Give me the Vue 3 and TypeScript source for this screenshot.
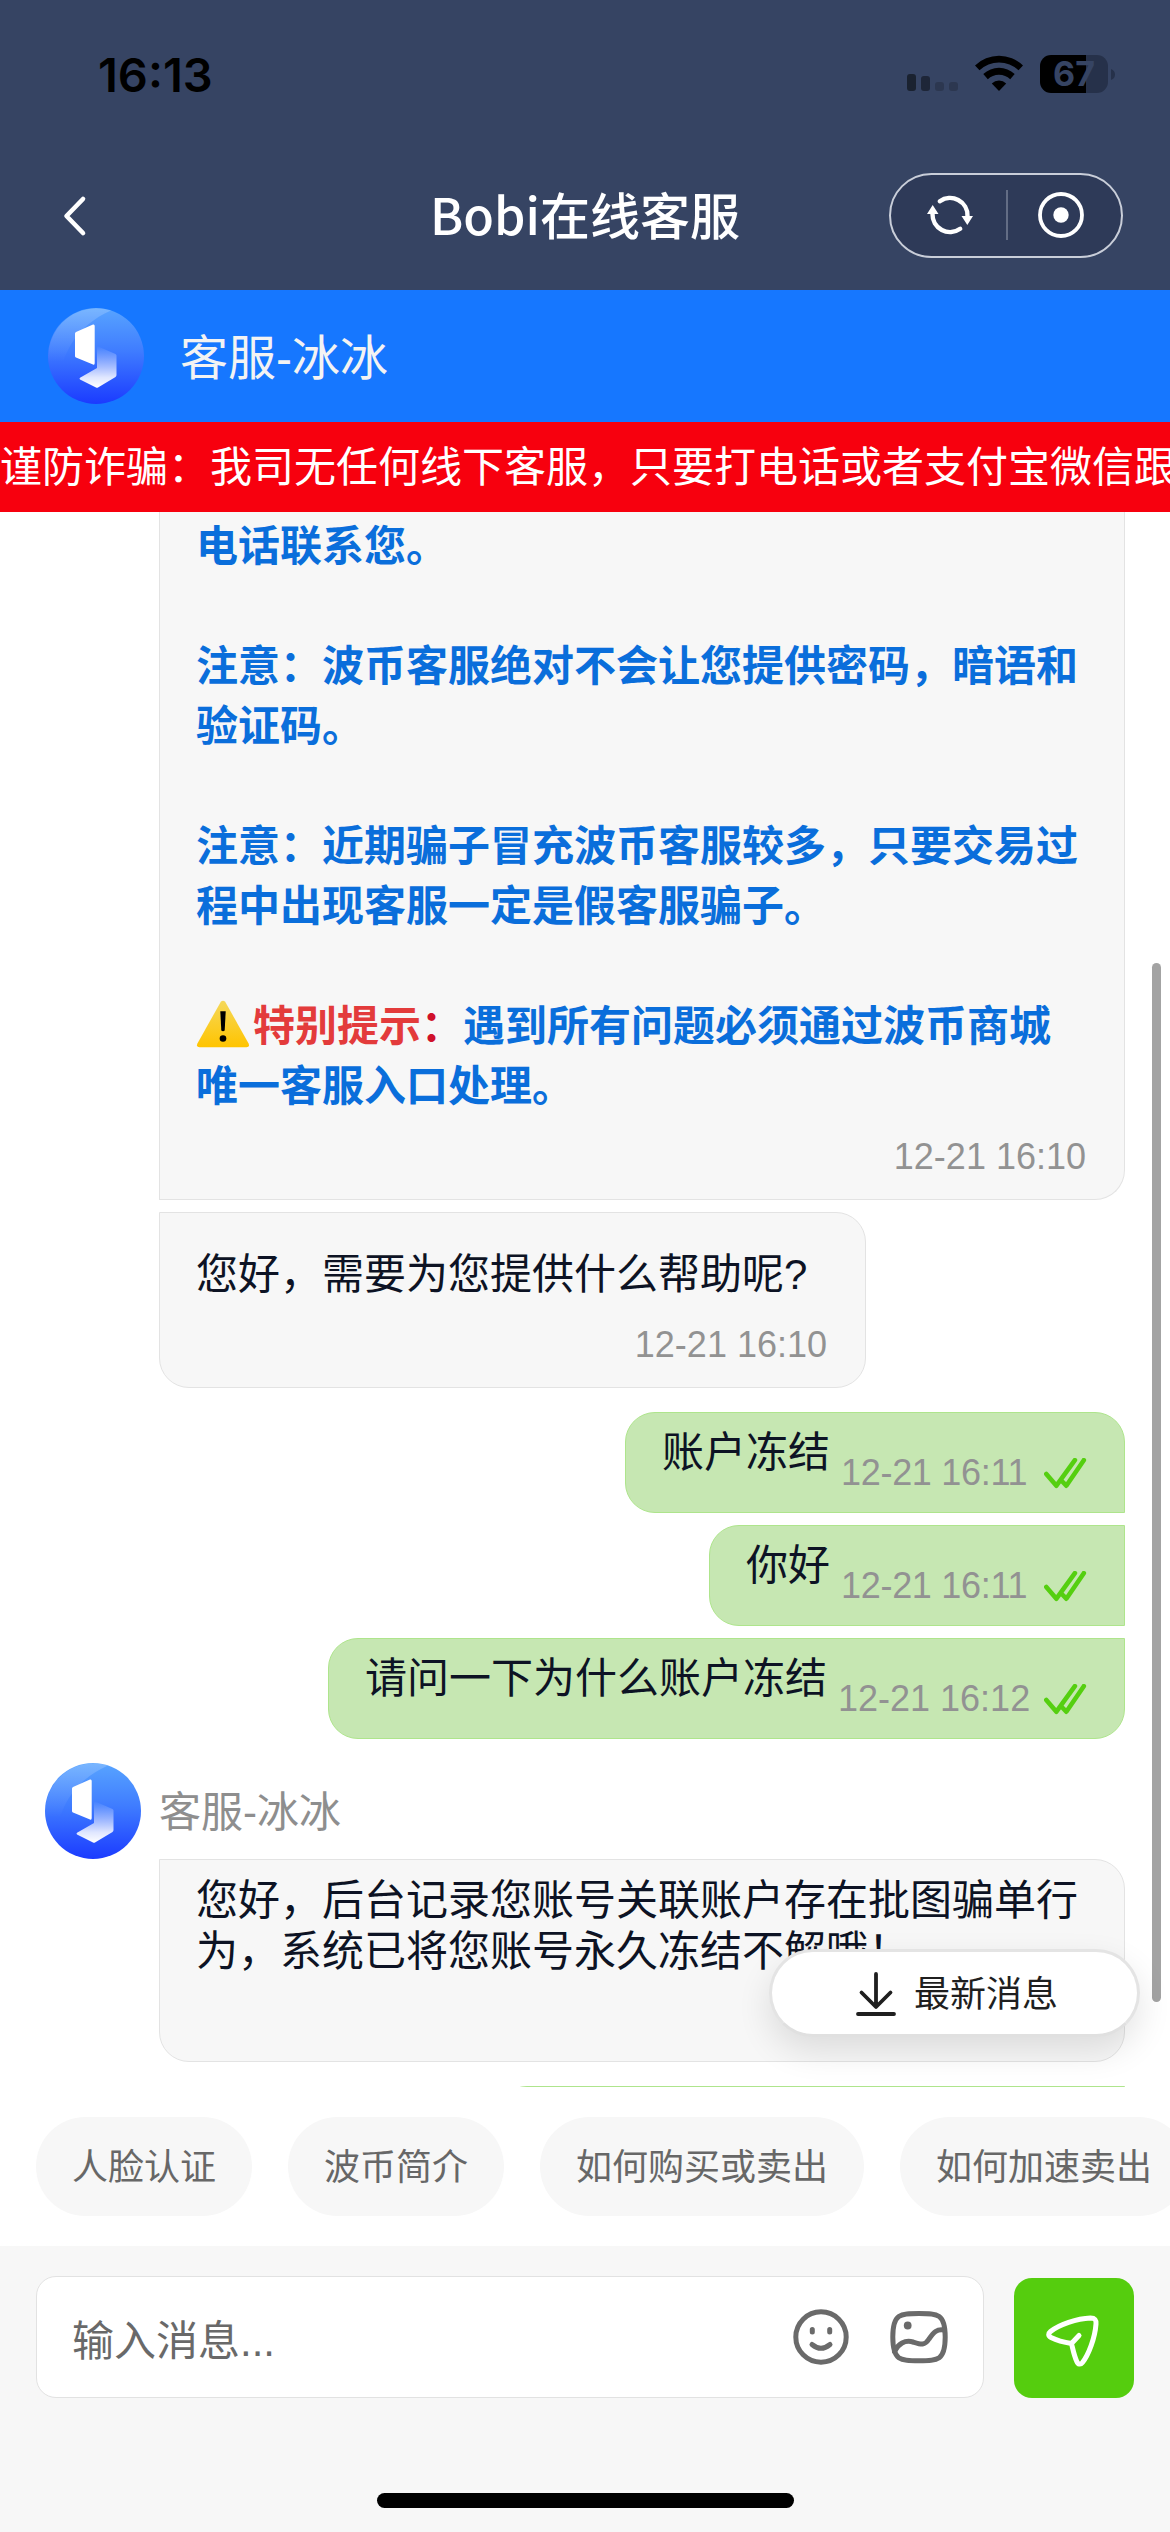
<script setup lang="ts">
interface Reply {
  id: number
  text: string
  time: string
  shape: 'first' | 'middle' | 'last'
}

const replies: Reply[] = [
  { id: 1, text: '账户冻结', time: '12-21 16:11', shape: 'first' },
  { id: 2, text: '你好', time: '12-21 16:11', shape: 'middle' },
  { id: 3, text: '请问一下为什么账户冻结', time: '12-21 16:12', shape: 'last' },
]

const quickReplies: string[] = ['人脸认证', '波币简介', '如何购买或卖出', '如何加速卖出']
</script>

<template>
  <div class="screen">
    <svg class="defs" width="0" height="0" aria-hidden="true">
      <defs>
        <linearGradient id="disc" x1="0" y1="0" x2="0" y2="1">
          <stop offset="0" stop-color="#58a4ff" />
          <stop offset="0.45" stop-color="#3f7cff" />
          <stop offset="1" stop-color="#1b3bff" />
        </linearGradient>
        <linearGradient id="sheen" x1="0" y1="0" x2="0" y2="1">
          <stop offset="0" stop-color="#fff" stop-opacity="0.2" />
          <stop offset="0.7" stop-color="#fff" stop-opacity="0" />
        </linearGradient>
        <linearGradient id="fold" x1="0" y1="0" x2="0" y2="1">
          <stop offset="0" stop-color="#fff" stop-opacity="0" />
          <stop offset="0.75" stop-color="#fff" stop-opacity="0.85" />
          <stop offset="1" stop-color="#fff" />
        </linearGradient>
        <symbol id="avatar" viewBox="0 0 96 96">
          <circle cx="48" cy="48" r="48" fill="url(#disc)" />
          <path d="M63 2.5A48 48 0 0 0 10 77C14 45 28 18 63 2.5Z" fill="url(#sheen)" />
          <path d="M28 24 45 16.5Q46.700 16 46.700 18V55Q46.700 57.500 45 56.500L28 49.500Q27 49 27 48V25.500Q27 24.500 28 24Z" fill="#fff" />
          <path d="M49 38 67.500 46Q68.500 46.500 68.500 47.500V67Q68.500 68 67.500 69L50 79.500Q49 80 48 79.500L32 71.500Q31 70.500 32 69.800L49 60Z" fill="url(#fold)" />
        </symbol>
        <symbol id="ticks" viewBox="0 0 44 32">
          <path d="M2.300 15.900 12.400 27.700 30.900 2.200M18.300 23.500 22.300 27.700 39.800 2.200" fill="none" stroke="#55cf10" stroke-width="4.600" stroke-linecap="round" stroke-linejoin="round" />
        </symbol>
      </defs>
    </svg>

    <header class="top">
      <div class="status">
        <span class="clock">16:13</span>
        <div class="status-icons">
          <svg class="signal" width="51" height="17" viewBox="0 0 51 17">
            <rect x="0" y="0" width="9" height="17" rx="3" fill="#1a2230" />
            <rect x="14" y="2" width="9" height="15" rx="3" fill="#1e2638" />
            <rect x="28" y="8" width="9" height="9" rx="3" fill="#2c3750" />
            <rect x="42" y="8" width="9" height="9" rx="3" fill="#2c3750" />
          </svg>
          <svg class="wifi" width="48" height="36" viewBox="0 0 48 36">
            <path d="M0 10.500A34.500 34.500 0 0 1 48 10.500L43.500 15.300A28 28 0 0 0 4.500 15.300Z" />
            <path d="M8.300 19A23 23 0 0 1 39.700 19L35.200 24.200A16 16 0 0 0 12.800 24.200Z" />
            <path d="M16.800 28.400A10.500 10.500 0 0 1 31.200 28.400L24 36Z" />
          </svg>
          <div class="battery">
            <span class="level">67</span>
          </div>
          <svg class="nub" width="4" height="11" viewBox="0 0 4 11"><path d="M0 0Q4 1.500 4 5.500T0 11Z" fill="#26314a" /></svg>
        </div>
      </div>
      <div class="nav">
        <svg class="back" width="28" height="44" viewBox="0 0 28 44">
          <path d="M22 5 5.500 22 22 39" fill="none" stroke="#fff" stroke-width="4.600" stroke-linecap="round" stroke-linejoin="round" />
        </svg>
        <h1>Bobi在线客服</h1>
        <div class="capsule">
          <svg width="50" height="50" viewBox="0 0 50 50">
            <g fill="none" stroke="#fff" stroke-width="4.400" stroke-linecap="round">
              <path d="M14.800 11.300A17.500 17.500 0 0 1 42.500 26" />
              <path d="M35.200 38.700A17.500 17.500 0 0 1 7.500 24" />
            </g>
            <path d="M36.500 26H48L42.300 35Z M2 24H13.500L7.700 15Z" fill="#fff" />
          </svg>
          <i class="split"></i>
          <svg width="50" height="50" viewBox="0 0 50 50">
            <circle cx="25" cy="25" r="21" fill="none" stroke="#fff" stroke-width="3.800" />
            <circle cx="25" cy="25" r="7.700" fill="#fff" />
          </svg>
        </div>
      </div>
    </header>

    <div class="agent-bar">
      <svg class="avatar"><use href="#avatar" /></svg>
      <span>客服-冰冰</span>
    </div>
    <div class="notice">谨防诈骗：我司无任何线下客服，只要打电话或者支付宝微信跟</div>

    <main class="chat">
      <article class="bubble in warning">
        <div class="body">
          电话联系您。<br /><br />注意：波币客服绝对不会让您提供密码，暗语和验证码。<br /><br />注意：近期骗子冒充波币客服较多，只要交易过程中出现客服一定是假客服骗子。<br /><br /><svg class="alert" width="54" height="48" viewBox="0 0 54 48">
            <defs>
              <linearGradient id="amber" x1="0" y1="0" x2="0" y2="1">
                <stop offset="0" stop-color="#f5d85a" />
                <stop offset="1" stop-color="#ffc400" />
              </linearGradient>
            </defs>
            <path d="M24.800 1.800Q27 -0.500 29.200 1.800L52.600 43.500Q54 47 50.500 47.200H3.500Q0 47 1.400 43.500Z" fill="url(#amber)" />
            <path d="M24.300 11.300H29.700L28.700 30.600Q27 32 25.300 30.600Z" />
            <circle cx="27" cy="38.500" r="3.300" />
          </svg><em>特别提示</em><b>：</b>遇到所有问题必须通过波币商城唯一客服入口处理。
        </div>
        <time>12-21 16:10</time>
      </article>

      <article class="bubble in greeting">
        <div class="body">您好，需要为您提供什么帮助呢?</div>
        <time>12-21 16:10</time>
      </article>

      <section class="mine">
        <article v-for="r in replies" :key="r.id" class="bubble out" :class="r.shape">
          <span class="body">{{ r.text }}</span>
          <time>{{ r.time }}</time>
          <svg class="ticks"><use href="#ticks" /></svg>
        </article>
      </section>

      <div class="sender">
        <svg class="avatar"><use href="#avatar" /></svg>
        <span>客服-冰冰</span>
      </div>
      <article class="bubble in verdict">
        <div class="body">您好，后台记录您账号关联账户存在批图骗单行为，系统已将您账号永久冻结不解哦！</div>
      </article>
      <article class="bubble out next"></article>

      <i class="scrollbar"></i>
      <button class="latest" type="button">
        <svg width="42" height="46" viewBox="0 0 42 46" fill="none" stroke="#1f1f1f" stroke-width="3.800" stroke-linecap="round" stroke-linejoin="round">
          <path d="M21 4V36M6.500 22.500 21 37 35.500 22.500M3 44H39" />
        </svg>
        <span>最新消息</span>
      </button>
    </main>

    <nav class="chips">
      <span v-for="q in quickReplies" :key="q" class="chip">{{ q }}</span>
    </nav>

    <footer>
      <div class="field">
        <span class="placeholder">输入消息...</span>
        <svg width="58" height="58" viewBox="0 0 58 58" fill="none" stroke="#6a6a6a" stroke-width="5" stroke-linecap="round">
          <circle cx="29" cy="29" r="25.200" />
          <path d="M20.300 21.500V24M37.700 21.500V24" />
          <path d="M20 36.500Q29 44 38 36.500" />
        </svg>
        <svg class="photo" width="58" height="58" viewBox="0 0 58 58" fill="none" stroke="#6a6a6a" stroke-width="5" stroke-linecap="round">
          <path d="M29 5.500C48 5.500 55.200 5.500 55.200 29S48 52.700 29 52.700 2.800 52.500 2.800 29 10 5.500 29 5.500Z" />
          <path d="M4.500 43.500C8 36 15 31.500 23 34 31 36.500 34.500 38 39 31 43.500 24.500 47 20.500 54 22" />
          <circle cx="17.700" cy="17.500" r="3.900" fill="#6a6a6a" stroke="none" />
        </svg>
      </div>
      <button class="send" type="button">
        <svg width="60" height="60" viewBox="0 0 60 60" fill="none" stroke="#fff" stroke-width="5" stroke-linecap="round" stroke-linejoin="round">
          <path d="M27.500 35.500C21 34.500 13 32.500 7 29.500 4 28 4 25.500 6.500 23.500 15 16.500 33 10.500 46.500 10 51 10 52.300 12 52 16 51 30 44.500 47 38.500 54.500 36.500 57 34 56.500 32.800 53.500 30 47.500 29 41.500 27.500 35.500L35 27.500" />
        </svg>
      </button>
      <i class="home"></i>
    </footer>
  </div>
</template>

<style>
body {
  margin: 0;
  background: #fff;
}
</style>

<style scoped>
.screen {
  width: 1170px;
  height: 2532px;
  display: flex;
  flex-direction: column;
  overflow: hidden;
  background: #fff;
  color: #0d1324;
  font-family: "Liberation Sans", "Noto Sans CJK SC", sans-serif;
  font-size: 42px;
}
.screen * {
  box-sizing: border-box;
}
svg {
  display: block;
  flex: none;
}
.defs {
  position: absolute;
}
.top {
  height: 290px;
  flex: none;
  background: #364463;
}
.status {
  height: 148px;
  display: flex;
  justify-content: space-between;
  padding: 0 55px 0 98px;
}
.clock {
  margin-top: 46px;
  font: 600 47px/57px Inter, sans-serif;
  color: #000;
}
.status-icons {
  display: flex;
  align-items: flex-start;
  padding-top: 55px;
}
.signal {
  margin: 19px 17px 0 0;
}
.battery {
  width: 68px;
  height: 38px;
  margin-left: 17px;
  border-radius: 11px;
  background: linear-gradient(90deg, #000 46px, #26314a 46px);
  text-align: center;
}
.level {
  display: block;
  font: 700 34px/38px Inter, sans-serif;
  color: #364463;
}
.nub {
  margin: 14px 0 0 3px;
}
.nav {
  height: 136px;
  display: grid;
  grid-template-columns: 1fr auto 1fr;
  align-items: center;
  padding: 0 47px 0 61px;
}
h1 {
  margin: -6px 0 0 -14px;
  font: 500 50px/70px "Noto Sans CJK SC", sans-serif;
  color: #fff;
}
.capsule {
  justify-self: end;
  width: 234px;
  height: 85px;
  display: flex;
  align-items: center;
  justify-content: space-between;
  margin-top: -2px;
  padding: 0 35px 0 34px;
  border: 2px solid #c9ced9;
  border-radius: 43px;
  background: #2e3a58;
}
.split {
  width: 2px;
  height: 50px;
  margin-left: 3px;
  background: #636d85;
}
.agent-bar {
  height: 132px;
  flex: none;
  display: flex;
  align-items: center;
  gap: 36px;
  padding-left: 48px;
  background: #1677ff;
  color: #f3f3f3;
  font-size: 48px;
}
.agent-bar span {
  padding-bottom: 4px;
}
.avatar {
  width: 96px;
  height: 96px;
}
.notice {
  height: 90px;
  flex: none;
  line-height: 92px;
  white-space: nowrap;
  overflow: hidden;
  background: #f7000e;
  color: #fff;
}
.chat {
  position: relative;
  height: 1575px;
  flex: none;
  overflow: hidden;
}
.bubble {
  border: 1px solid #e3e3e3;
  border-radius: 30px;
}
.in {
  margin-left: 159px;
  padding: 0 36px;
  border-top-left-radius: 0;
  background: #f7f7f7;
}
time {
  font-size: 36px;
  line-height: 42px;
  color: #929292;
  white-space: nowrap;
}
.in time {
  display: block;
  margin-right: 2px;
  text-align: right;
}
.warning {
  width: 966px;
  height: 688px;
  border-top: 0;
  border-radius: 0 0 30px 0;
}
.warning .body {
  padding-top: 5px;
  line-height: 60px;
  font-weight: 700;
  color: #0a6edb;
}
.warning em {
  font-style: normal;
  color: #e33b3b;
}
.warning b {
  font-weight: inherit;
  color: #d0112b;
}
.warning time {
  margin-top: 19px;
}
.alert {
  display: inline-block;
  margin: 0 3px 0 0;
  vertical-align: -7px;
}
.greeting {
  width: 707px;
  height: 176px;
  margin-top: 12px;
}
.greeting .body {
  padding-top: 32px;
  line-height: 60px;
}
.greeting time {
  margin: 19px 2px 0 0;
}
.mine {
  display: flex;
  flex-direction: column;
  align-items: flex-end;
  gap: 12px;
  margin: 24px 45px 0 0;
}
.out {
  height: 101px;
  display: flex;
  align-items: flex-start;
  padding: 0 36px;
  border-color: #aee58c;
  background: #c6e7b2;
}
.out .body {
  line-height: 60px;
  margin-top: 10px;
}
.out time {
  width: 189px;
  margin: 39px 14px 0 11px;
  letter-spacing: -0.3px;
}
.first {
  border-bottom-right-radius: 0;
}
.middle {
  border-radius: 30px 0 0 30px;
}
.last {
  border-top-right-radius: 0;
}
.last time {
  width: 192px;
  letter-spacing: 0;
}
.ticks {
  width: 44px;
  height: 32px;
  margin-top: 45px;
}
.sender {
  height: 96px;
  display: flex;
  align-items: center;
  gap: 18px;
  margin: 24px 0 0 45px;
  color: #8e8e8e;
}
.sender span {
  padding-bottom: 6px;
}
.verdict {
  width: 966px;
  height: 203px;
  padding-top: 15px;
  line-height: 51px;
}
.next {
  width: 628px;
  margin: 24px 0 0 497px;
  border-radius: 30px 0 0 30px;
}
.scrollbar {
  position: absolute;
  top: 451px;
  right: 9px;
  width: 9px;
  height: 1039px;
  border-radius: 5px;
  background: #a3a3a3;
}
.latest {
  position: absolute;
  top: 1437px;
  right: 30px;
  width: 371px;
  height: 88px;
  display: flex;
  align-items: center;
  padding: 0 0 0 83px;
  gap: 17px;
  border: 3px solid #e4e4e4;
  border-bottom-color: #e0e0e0;
  border-radius: 44px;
  background: #fff;
  box-shadow: 0 14px 34px rgba(0, 0, 0, 0.11);
  color: #1f1f1f;
  font: 36px "Noto Sans CJK SC", sans-serif;
}
.latest span {
  padding-bottom: 4px;
}
.chips {
  height: 159px;
  flex: none;
  display: flex;
  gap: 36px;
  padding: 30px 0 0 36px;
}
.chip {
  flex: none;
  height: 99px;
  padding: 0 36px;
  border-radius: 50px;
  background: #f7f7f7;
  color: #676767;
  font-size: 36px;
  line-height: 101px;
}
footer {
  flex: 1;
  display: flex;
  flex-wrap: wrap;
  align-content: flex-start;
  align-items: flex-end;
  justify-content: center;
  gap: 0 30px;
  padding: 30px 36px 0;
  background: #f7f7f7;
}
.field {
  width: 948px;
  height: 122px;
  display: flex;
  align-items: center;
  padding: 0 35px;
  gap: 40px;
  border: 1px solid #e2e2e2;
  border-radius: 20px;
  background: #fff;
}
.placeholder {
  flex: 1;
  padding-top: 1px;
  color: #696969;
}
.send {
  width: 120px;
  height: 120px;
  padding: 0 0 0 30px;
  border: 0;
  border-radius: 18px;
  background: #55cd0e;
}
.home {
  width: 417px;
  height: 15px;
  margin-top: 95px;
  border-radius: 8px;
  background: #000;
}
</style>
